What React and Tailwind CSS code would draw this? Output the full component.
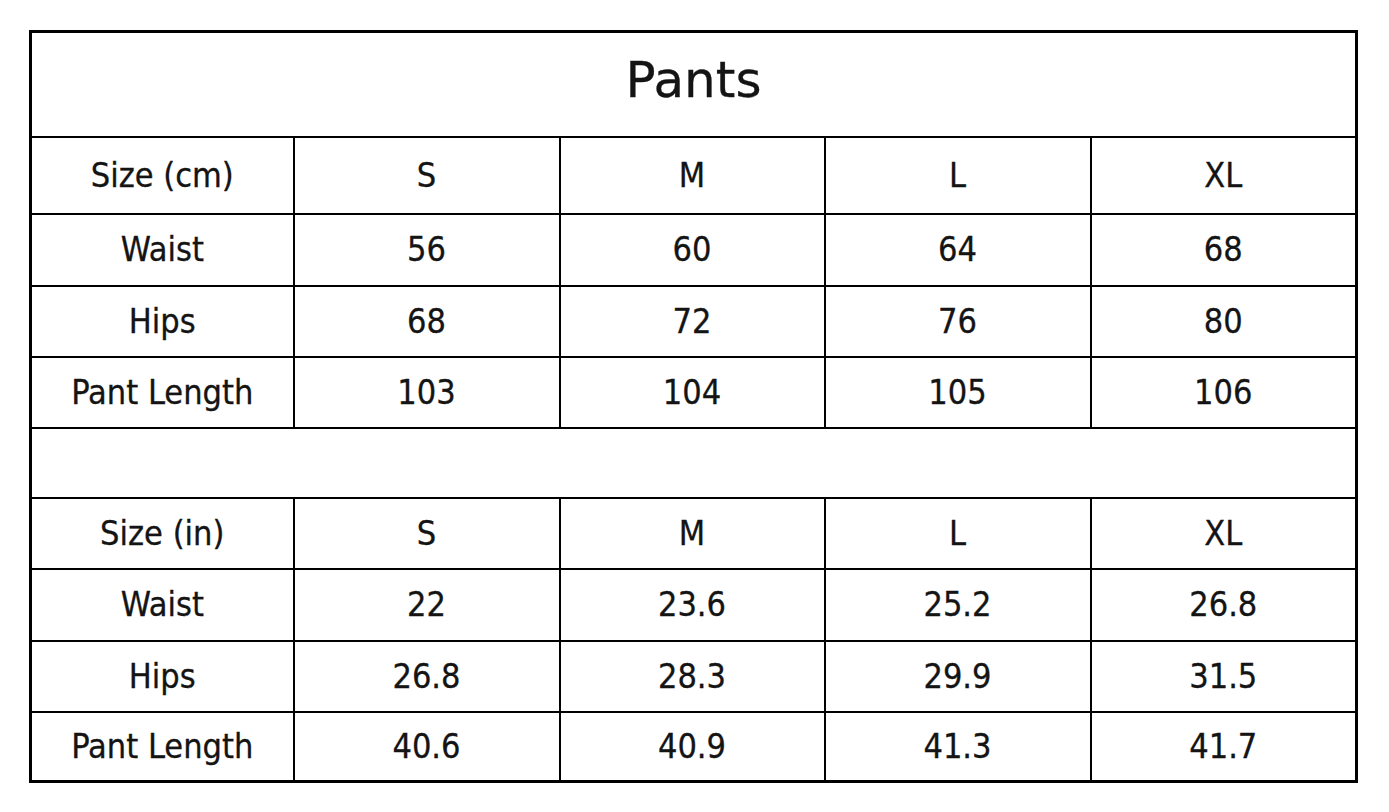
const cm = [
  ['Size (cm)', 'S', 'M', 'L', 'XL'],
  ['Waist', '56', '60', '64', '68'],
  ['Hips', '68', '72', '76', '80'],
  ['Pant Length', '103', '104', '105', '106'],
];

const inches = [
  ['Size (in)', 'S', 'M', 'L', 'XL'],
  ['Waist', '22', '23.6', '25.2', '26.8'],
  ['Hips', '26.8', '28.3', '29.9', '31.5'],
  ['Pant Length', '40.6', '40.9', '41.3', '41.7'],
];

const cmHeights = ['h-[77px]', 'h-[72px]', 'h-[71px]', 'h-[71px]'];
const inHeights = ['h-[71px]', 'h-[72px]', 'h-[71px]', 'h-[70px]'];

const Row = ({ cells, height }) => (
  <tr className={height}>
    {cells.map((c, i) => (
      <td key={i} className="border-2 border-black p-0 text-center align-middle">
        {c}
      </td>
    ))}
  </tr>
);

export default function App() {
  return (
    <div className="min-h-screen w-full bg-white pt-[30px] pl-[29px] text-[#141414]">
      <table className="w-[1329px] table-fixed border-collapse border-[3px] border-black font-['DejaVu_Sans_Condensed','DejaVu_Sans',sans-serif] text-[34px] [-webkit-text-stroke:0.3px_#141414]">
        <colgroup>
          <col className="w-[263px]" />
          <col className="w-[266px]" />
          <col className="w-[265px]" />
          <col className="w-[266px]" />
          <col className="w-[266px]" />
        </colgroup>
        <tbody>
          <tr className="h-[105px]">
            <td colSpan={5} className="border-2 border-black p-0 pb-[8px] text-center align-middle font-['DejaVu_Sans',sans-serif] text-[50px]">
              Pants
            </td>
          </tr>
          {cm.map((r, i) => (
            <Row key={'cm' + i} cells={r} height={cmHeights[i]} />
          ))}
          <tr className="h-[70px]">
            <td colSpan={5} className="border-2 border-black p-0"></td>
          </tr>
          {inches.map((r, i) => (
            <Row key={'in' + i} cells={r} height={inHeights[i]} />
          ))}
        </tbody>
      </table>
    </div>
  );
}
